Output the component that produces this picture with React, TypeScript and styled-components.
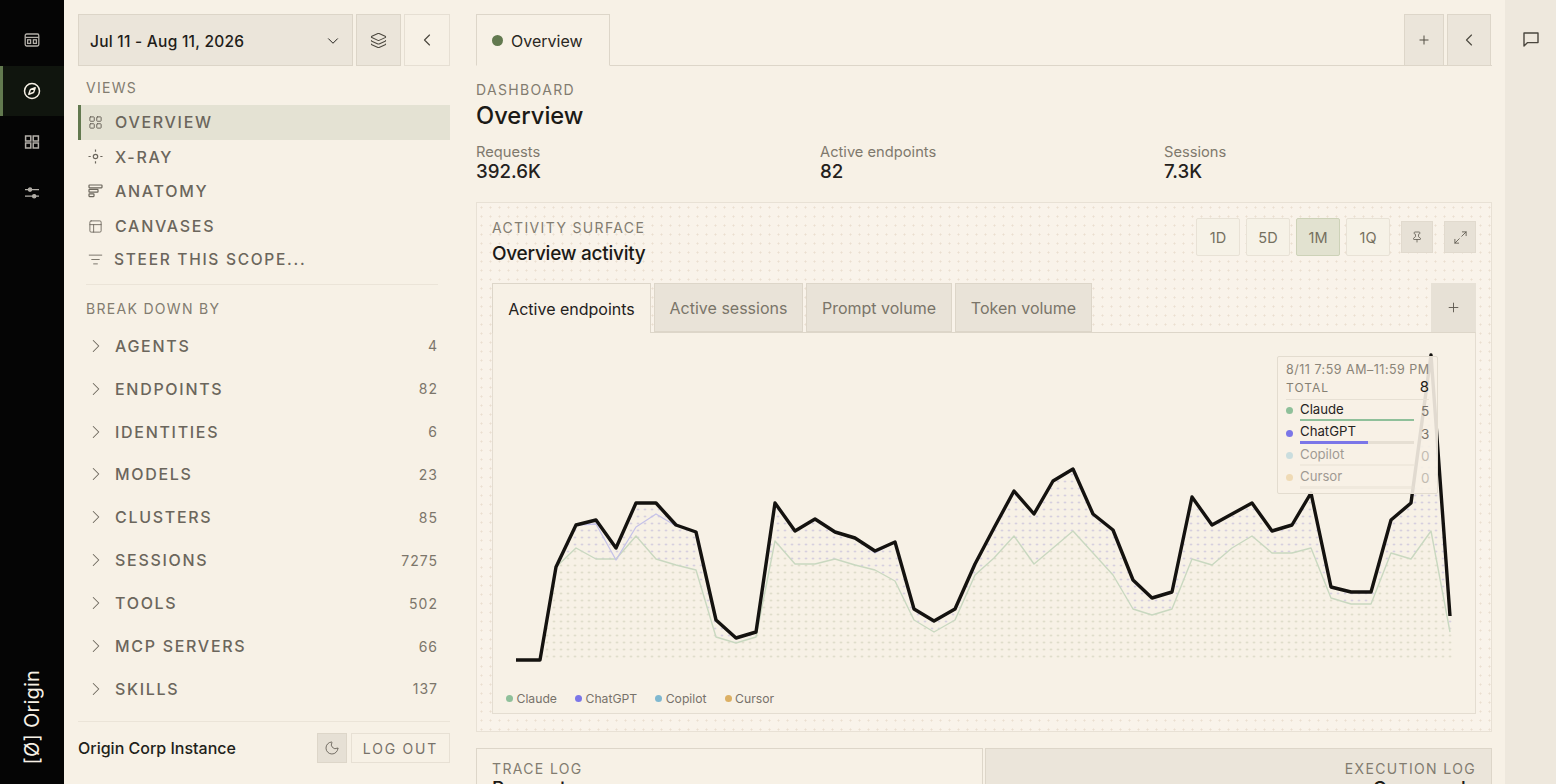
import React from "react";
import styled, { createGlobalStyle } from "styled-components";
import { ChevronDown, ChevronLeft, ChevronRight, Compass, Layers, LayoutGrid, ListFilter, Maximize2, Moon, PanelsTopLeft, Pin, Plus } from "lucide-react";

const Global = createGlobalStyle`
  html, body { margin: 0; height: 784px; overflow: hidden; background: #f7f1e6; }
  body { font-family: Inter, "Liberation Sans", sans-serif; color: #1c1a16; }
  * { box-sizing: border-box; }
  #root { height: 784px; }
`;

const Page = styled.div`display: flex; width: 1556px; height: 784px; overflow: hidden; background: #f7f1e6;`;
const Rail = styled.nav`width: 64px; flex: none; background: #050505; display: flex; flex-direction: column; padding-top: 15px;`;
const RailButton = styled.div<{ $active?: boolean }>`
  height: 50px; margin-bottom: 1px; display: flex; align-items: center; justify-content: center;
  color: ${p => p.$active ? "#f7f1e6" : "#b4b0a9"};
  background: ${p => p.$active ? "#10150e" : "transparent"};
  border-left: ${p => p.$active ? "3px solid #62794f" : "0"};
  padding-right: ${p => p.$active ? "3px" : "0"};
`;
const Brand = styled.div`
  margin-top: auto; margin-bottom: 20px; align-self: center; writing-mode: vertical-rl; transform: rotate(180deg);
  color: #f7f1e6; font-size: 20px; line-height: 24px; letter-spacing: .2px; white-space: nowrap;
`;
const Sidebar = styled.aside`width: 399px; flex: none; padding: 14px 13px 0 14px; display: flex; flex-direction: column;`;
const TopControls = styled.div`display: flex; gap: 3px; height: 52px;`;
const DateButton = styled.div`
  flex: 1; background: #ebe5da; border: 1px solid #dcd5c8; display: flex; align-items: center; justify-content: space-between;
  padding: 2px 10px 0 11px; font-size: 15.5px; font-weight: 500; letter-spacing: .25px; color: #1f1d19;
`;
const IconBox = styled.div<{ $w?: number; $filled?: boolean }>`
  width: ${p => p.$w ?? 46}px; flex: none; display: flex; align-items: center; justify-content: center;
  background: ${p => p.$filled ? "#ebe5da" : "transparent"}; border: 1px solid ${p => p.$filled ? "#dcd5c8" : "#e6dfd3"}; color: #4c483f;
`;
const GroupLabel = styled.div<{ $top: number; $bottom: number }>`
  font-size: 14px; line-height: 17px; letter-spacing: 1.3px; color: #827c70; padding-left: 8px;
  margin-top: ${p => p.$top}px; margin-bottom: ${p => p.$bottom}px;
`;
const ViewRow = styled.div<{ $active?: boolean }>`
  height: 34.6px; display: flex; align-items: center; gap: 12px; padding-left: ${p => p.$active ? "7px" : "10px"};
  font-size: 16px; letter-spacing: 1.7px; font-weight: 500; color: #6b665c;
  background: ${p => p.$active ? "#e4e2d3" : "transparent"};
  border-left: ${p => p.$active ? "3px solid #62794f" : "0"};
`;
const SteerRow = styled.div`
  height: 33px; display: flex; align-items: center; gap: 11px; padding-left: 10px;
  font-size: 15.5px; letter-spacing: 1.72px; font-weight: 500; color: #6b665c;
`;
const Divider = styled.div`height: 1px; background: #ebe4d8; margin: 8px 12px 0 8px;`;
const BreakRow = styled.div`
  height: 42.9px; display: flex; align-items: center; padding: 0 12px 0 7px; font-size: 16px; letter-spacing: 1.7px; font-weight: 500; color: #6b665c;
`;
const RowName = styled.span`margin-left: 8px; flex: 1;`;
const RowCount = styled.span`font-size: 14px; letter-spacing: 1px; font-weight: 400; color: #7c766b;`;
const Footer = styled.div`
  margin-top: 11px; border-top: 1px solid #ebe4d8; padding-top: 11px; display: flex; align-items: flex-start; height: 54px; align-self: stretch;
`;
const Instance = styled.div`flex: 1; font-size: 16px; line-height: 30px; font-weight: 500; color: #221f1a;`;
const MoonButton = styled.div`width: 30px; height: 30px; background: #e6e0d5; border: 1px solid #ddd6c9; display: flex; align-items: center; justify-content: center; color: #625d53;`;
const LogOut = styled.div`width: 99px; height: 30px; margin-left: 4px; border: 1px solid #e7e0d4; display: flex; align-items: center; justify-content: center; font-size: 14px; letter-spacing: 1.8px; color: #77726a;`;

const Main = styled.main`width: 1016px; margin-left: 13px; flex: none; padding-top: 14px;`;
const TabBar = styled.div`height: 52px; display: flex; border-bottom: 1px solid #ddd6c9;`;
const DocTab = styled.div`
  width: 134px; height: 52px; border: 1px solid #ddd6c9; border-bottom-color: #f7f1e6; display: flex; align-items: center; gap: 8px; padding: 2px 0 0 15px;
  font-size: 16px; color: #2a2722; background: #f7f1e6;
`;
const Dot = styled.span<{ $c: string; $s?: number }>`
  width: ${p => p.$s ?? 6}px; height: ${p => p.$s ?? 6}px; border-radius: 50%; background: ${p => p.$c}; flex: none; margin-top: -1px;
`;
const TabActions = styled.div`margin-left: auto; margin-right: 1px; display: flex; gap: 3px;`;
const TabAction = styled.div<{ $w: number }>`
  width: ${p => p.$w}px; height: 52px; display: flex; align-items: center; justify-content: center; color: #4f4b42;
  background: #ebe5da; border: 1px solid #ddd6c9;
`;
const Eyebrow = styled.div`font-size: 14px; line-height: 17px; letter-spacing: 1.35px; color: #827c70; margin-top: 15px;`;
const Title = styled.h1`font-size: 23.7px; line-height: 29px; font-weight: 500; margin: 3px 0 0;`;
const Stats = styled.div`display: grid; grid-template-columns: 344px 344px 1fr; margin-top: 14px; height: 44px;`;
const StatLabel = styled.div`font-size: 14.7px; line-height: 17px; color: #7f796d;`;
const StatValue = styled.div`font-size: 18.7px; line-height: 22px; font-weight: 500; color: #24211c;`;

const Surface = styled.section`
  margin-top: 14px; height: 530px; border: 1px solid #e8e1d5; padding: 15px 15px 0;
  background-color: #f9f3ea;
  background-image: radial-gradient(circle, #eadfd0 .9px, transparent 1.15px);
  background-size: 9px 9px;
`;
const SurfaceHead = styled.div`display: flex; height: 65px;`;
const SurfaceTitles = styled.div`flex: 1; padding-top: 1px;`;
const SurfaceEyebrow = styled.div`font-size: 14px; line-height: 17px; letter-spacing: 1.35px; color: #827c70;`;
const SurfaceTitle = styled.div`font-size: 19px; line-height: 24px; font-weight: 500; margin-top: 6px; letter-spacing: -.25px;`;
const Ranges = styled.div`display: flex; gap: 6px; margin-right: 11px; height: 38px;`;
const Range = styled.div<{ $active?: boolean }>`
  width: 44px; display: flex; align-items: center; justify-content: center; font-size: 14.5px; color: #75705f;
  background: ${p => p.$active ? "#e2e2d0" : "#f6f2e7"}; border: 1px solid ${p => p.$active ? "#cdd2b8" : "#e8e2d6"}; border-radius: 2px;
`;
const ToolButton = styled.div<{ $gap?: number }>`
  width: 32px; height: 32px; margin-top: 3px; margin-left: ${p => p.$gap ?? 0}px; background: #e7e1d6; border: 1px solid #e1dace;
  display: flex; align-items: center; justify-content: center; color: #5f5a50;
`;
const ChartTabs = styled.div`display: flex; gap: 3px; height: 50px; align-items: stretch;`;
const ChartTab = styled.div<{ $active?: boolean; $w: number }>`
  width: ${p => p.$w}px; display: flex; align-items: center; justify-content: center; font-size: 16px; padding-top: 1px;
  color: ${p => p.$active ? "#24211c" : "#7a7569"};
  background: ${p => p.$active ? "#f7f1e6" : "#e9e3d8"};
  border: 1px solid #ddd6c9; border-bottom: ${p => p.$active ? "0" : "1px solid #ddd6c9"};
  height: ${p => p.$active ? "50px" : "49px"};
  position: relative; z-index: 1;
`;
const AddTab = styled.div`
  margin-left: auto; width: 45px; height: 49px; background: #e7e1d6; display: flex; align-items: center; justify-content: center; color: #5f5a50;
`;
const ChartCard = styled.div`
  position: relative; height: 382px; margin-top: -1px; background: #f7f1e6; border: 1px solid #e4ddd1; border-top: 1px solid #ddd6c9;
`;
const ChartSvg = styled.svg`display: block; position: absolute; left: 0; top: 0;`;
const Legend = styled.div`position: absolute; left: 13px; bottom: 7px; display: flex; gap: 18px; font-size: 12.2px; line-height: 15px; color: #77726a;`;
const LegendItem = styled.div`display: flex; align-items: center; gap: 3.5px;`;
const Tooltip = styled.div`
  position: absolute; left: 784px; top: 23px; width: 161px; height: 138px; padding: 5px 8px 0 8px;
  background: rgba(247,241,230,.9); border: 1px solid #e3dccf; border-radius: 2px; font-size: 13.2px; color: #25221d;
`;
const TipTime = styled.div`font-size: 12.5px; line-height: 15px; letter-spacing: .5px; color: #8a8478; white-space: nowrap;`;
const TipTotal = styled.div`
  display: flex; justify-content: space-between; align-items: baseline; height: 22px; font-size: 12px; letter-spacing: 1px; color: #857f73;
  border-bottom: 1px solid #e7e0d4; line-height: 18px; margin-top: 1px;
`;
const TipStrong = styled.span`font-size: 15px; color: #1c1a16; letter-spacing: 0;`;
const TipRow = styled.div<{ $muted?: boolean }>`
  display: flex; align-items: center; height: 22.4px; gap: 7px; opacity: ${p => p.$muted ? .42 : 1};
`;
const TipBody = styled.div`flex: 1; height: 100%; position: relative; line-height: 17px; padding-top: 1px;`;
const TipBar = styled.div`position: absolute; left: 0; right: 0; bottom: 1px; height: 2.5px; background: #e6dfd3;`;
const TipFill = styled.div`height: 100%;`;
const TipValue = styled.span`width: 8px; text-align: right; color: #78736a; font-size: 13.5px;`;

const Logs = styled.div`display: flex; gap: 2px; margin-top: 16px; height: 60px;`;
const LogPanel = styled.div<{ $alt?: boolean }>`
  flex: 1; border: 1px solid #ddd6c9; border-bottom: 0; padding: 11px 15px 0; background: ${p => p.$alt ? "#ebe5da" : "transparent"};
  text-align: ${p => p.$alt ? "right" : "left"};
`;
const LogLabel = styled.div`font-size: 14px; line-height: 17px; letter-spacing: 1.35px; color: #827c70;`;
const LogTitle = styled.div`font-size: 19px; line-height: 24px; font-weight: 500;`;
const RightRail = styled.aside`
  width: 51px; margin-left: 13px; flex: none; background: #eee8dd; display: flex; justify-content: center; padding-top: 32px; color: #4a463e;
`;

const CalendarGlyph = () => (
  <svg width="16" height="16" viewBox="0 0 16 16" fill="none" stroke="currentColor" strokeWidth="1.3">
    <rect x="1.2" y="2" width="13.6" height="12" rx="1.4" />
    <path d="M1.2 5.4h13.6" />
    <rect x="3.6" y="7.8" width="3" height="3.6" />
    <rect x="9.4" y="7.8" width="3" height="3.6" />
  </svg>
);
const GridGlyph = () => (
  <svg width="16" height="16" viewBox="0 0 16 16" fill="none" stroke="currentColor" strokeWidth="1.5">
    <rect x="1.6" y="2" width="5.2" height="5" />
    <rect x="9.2" y="2" width="5.2" height="5" />
    <rect x="1.6" y="9" width="5.2" height="5" />
    <rect x="9.2" y="9" width="5.2" height="5" />
  </svg>
);
const SlidersGlyph = () => (
  <svg width="16" height="14" viewBox="0 0 16 14" fill="currentColor" stroke="currentColor" strokeWidth="1.3">
    <path d="M1 3.6h14M1 10.2h14" fill="none" />
    <circle cx="6" cy="3.6" r="1.6" />
    <circle cx="10.2" cy="10.2" r="1.6" />
  </svg>
);
const XrayGlyph = () => (
  <svg width="15" height="15" viewBox="0 0 15 15" fill="none" stroke="currentColor" strokeWidth="1.2">
    <circle cx="7.5" cy="7.5" r="2.2" />
    <path d="M7.5 .5v2.2M7.5 12.3v2.2M.5 7.5h2.2M12.3 7.5h2.2" />
  </svg>
);
const AnatomyGlyph = () => (
  <svg width="15" height="14" viewBox="0 0 15 14" fill="none" stroke="currentColor" strokeWidth="1.2">
    <rect x="1" y="1" width="13" height="2.8" rx=".5" />
    <rect x="1" y="5.4" width="9" height="2.8" rx=".5" />
    <rect x="1" y="9.8" width="5" height="2.8" rx=".5" />
  </svg>
);
const ChatGlyph = () => (
  <svg width="16" height="15" viewBox="0 0 16 15" fill="none" stroke="currentColor" strokeWidth="1.4" strokeLinejoin="round">
    <path d="M1 1h14v9.6H4.6L1 14z" />
  </svg>
);

const xs = [516,540,556,576,596,616,636,656,676,696,716,736,756,775,795,815,835,855,875,895,914,934,955,975,994,1014,1034,1053,1073,1093,1113,1133,1152,1172,1192,1212,1232,1252,1272,1292,1311,1331,1351,1371,1391,1411,1431,1450];
const blackY = [660,660,567,525,520,548,503,503,525,532,620,638,632,503,531,519,532,538,551,542,609,621,609,564,528,491,514,481,469,514,530,580,598,592,497,525,514,503,531,525,493,587,592,592,520,503,355,616];
const greenY = [660,660,567,548,559,559,536,559,565,570,637,643,637,541,564,564,559,565,570,581,620,632,620,575,558,536,564,548,531,553,575,609,615,609,559,565,548,536,553,553,548,598,604,604,553,559,531,632];
const purpleY = blackY.map((y, i) => (i === 4 ? 524 : i === 5 ? 560 : i === 6 ? 527 : i === 7 ? 514 : i === 8 ? 526 : i === 18 ? 553 : y));
const ox = 493, oy = 333;
const pts = (ys: number[]) => xs.map((x, i) => `${x - ox},${ys[i] - oy}`).join(" ");
const area = (ys: number[]) => `${pts(ys)} ${xs[xs.length - 1] + 3 - ox},${616 - oy} ${xs[xs.length - 1] + 3 - ox},${658 - oy} ${xs[0] - ox},${658 - oy}`;

const Chart = () => (
  <ChartSvg width="982" height="340" viewBox="0 0 982 340" fill="none">
    <defs>
      <pattern id="dotsPurple" width="7" height="7" patternUnits="userSpaceOnUse" patternTransform="translate(1.5 -2)">
        <circle cx="3.5" cy="3.5" r="1" fill="#c8c1da" />
      </pattern>
      <pattern id="dotsGreen" width="7" height="7" patternUnits="userSpaceOnUse" patternTransform="translate(1.5 -2)">
        <circle cx="3.5" cy="3.5" r="1" fill="#d4d4c0" />
      </pattern>
    </defs>
    <polygon points={area(blackY)} fill="url(#dotsPurple)" />
    <polygon points={area(greenY)} fill="#f7f1e6" />
    <polygon points={area(greenY)} fill="url(#dotsGreen)" />
    <polyline points={pts(greenY)} stroke="#c9d8c0" strokeWidth="1.4" strokeLinejoin="round" />
    <polyline points={pts(purpleY)} stroke="#c5c2e8" strokeWidth="1.3" strokeLinejoin="round" />
    <polyline points={pts(blackY)} stroke="#14120f" strokeWidth="3.4" strokeLinejoin="round" />
  </ChartSvg>
);

const views = [
  { n: "OVERVIEW", i: <LayoutGrid size={15} strokeWidth={1.6} />, active: true },
  { n: "X-RAY", i: <XrayGlyph /> },
  { n: "ANATOMY", i: <AnatomyGlyph /> },
  { n: "CANVASES", i: <PanelsTopLeft size={15} strokeWidth={1.4} /> },
];
const breakdown: [string, string][] = [["AGENTS","4"],["ENDPOINTS","82"],["IDENTITIES","6"],["MODELS","23"],["CLUSTERS","85"],["SESSIONS","7275"],["TOOLS","502"],["MCP SERVERS","66"],["SKILLS","137"]];
const tipRows = [
  { n: "Claude", v: 5, c: "#8fc09a", w: 100 },
  { n: "ChatGPT", v: 3, c: "#7b76e8", w: 60 },
  { n: "Copilot", v: 0, c: "#8cc3d4", w: 0 },
  { n: "Cursor", v: 0, c: "#e5bb72", w: 0 },
];

export default function App() {
  return (
    <Page>
      <Global />
      <Rail>
        <RailButton><CalendarGlyph /></RailButton>
        <RailButton $active><Compass size={18} strokeWidth={2} /></RailButton>
        <RailButton><GridGlyph /></RailButton>
        <RailButton><SlidersGlyph /></RailButton>
        <Brand>[Ø] Origin</Brand>
      </Rail>
      <Sidebar>
        <TopControls>
          <DateButton>Jul 11 - Aug 11, 2026<ChevronDown size={18} strokeWidth={1.3} /></DateButton>
          <IconBox $w={45} $filled><Layers size={17} strokeWidth={1.5} /></IconBox>
          <IconBox><ChevronLeft size={20} strokeWidth={1.4} /></IconBox>
        </TopControls>
        <GroupLabel $top={13} $bottom={9}>VIEWS</GroupLabel>
        {views.map(v => <ViewRow key={v.n} $active={v.active}>{v.i}{v.n}</ViewRow>)}
        <SteerRow><ListFilter size={15} strokeWidth={1.4} />STEER THIS SCOPE...</SteerRow>
        <Divider />
        <GroupLabel $top={15} $bottom={7}>BREAK DOWN BY</GroupLabel>
        {breakdown.map(([n, c]) => (
          <BreakRow key={n}>
            <ChevronRight size={22} strokeWidth={1.1} />
            <RowName>{n}</RowName>
            <RowCount>{c}</RowCount>
          </BreakRow>
        ))}
        <Footer>
          <Instance>Origin Corp Instance</Instance>
          <MoonButton><Moon size={16} strokeWidth={1.3} /></MoonButton>
          <LogOut>LOG OUT</LogOut>
        </Footer>
      </Sidebar>
      <Main>
        <TabBar>
          <DocTab><Dot $c="#62794f" $s={11} />Overview</DocTab>
          <TabActions>
            <TabAction $w={40}><Plus size={14} strokeWidth={1.7} /></TabAction>
            <TabAction $w={44}><ChevronLeft size={20} strokeWidth={1.4} /></TabAction>
          </TabActions>
        </TabBar>
        <Eyebrow>DASHBOARD</Eyebrow>
        <Title>Overview</Title>
        <Stats>
          <div><StatLabel>Requests</StatLabel><StatValue>392.6K</StatValue></div>
          <div><StatLabel>Active endpoints</StatLabel><StatValue>82</StatValue></div>
          <div><StatLabel>Sessions</StatLabel><StatValue>7.3K</StatValue></div>
        </Stats>
        <Surface>
          <SurfaceHead>
            <SurfaceTitles>
              <SurfaceEyebrow>ACTIVITY SURFACE</SurfaceEyebrow>
              <SurfaceTitle>Overview activity</SurfaceTitle>
            </SurfaceTitles>
            <Ranges>
              <Range>1D</Range><Range>5D</Range><Range $active>1M</Range><Range>1Q</Range>
            </Ranges>
            <ToolButton><Pin size={12} strokeWidth={1.6} /></ToolButton>
            <ToolButton $gap={11}><Maximize2 size={15} strokeWidth={1.4} /></ToolButton>
          </SurfaceHead>
          <ChartTabs>
            <ChartTab $active $w={159}>Active endpoints</ChartTab>
            <ChartTab $w={149}>Active sessions</ChartTab>
            <ChartTab $w={146}>Prompt volume</ChartTab>
            <ChartTab $w={137}>Token volume</ChartTab>
            <AddTab><Plus size={15} strokeWidth={1.5} /></AddTab>
          </ChartTabs>
          <ChartCard>
            <Chart />
            <Tooltip>
              <TipTime>8/11 7:59 AM–11:59 PM</TipTime>
              <TipTotal>TOTAL<TipStrong>8</TipStrong></TipTotal>
              {tipRows.map(r => (
                <TipRow key={r.n} $muted={r.v === 0}>
                  <Dot $c={r.c} $s={7} />
                  <TipBody>
                    {r.n}
                    <TipBar><TipFill style={{ width: `${r.w}%`, background: r.c }} /></TipBar>
                  </TipBody>
                  <TipValue>{r.v}</TipValue>
                </TipRow>
              ))}
            </Tooltip>
            <Legend>
              <LegendItem><Dot $c="#8fc09a" $s={7} />Claude</LegendItem>
              <LegendItem><Dot $c="#7b76e8" $s={7} />ChatGPT</LegendItem>
              <LegendItem><Dot $c="#7fb8d0" $s={7} />Copilot</LegendItem>
              <LegendItem><Dot $c="#dcb064" $s={7} />Cursor</LegendItem>
            </Legend>
          </ChartCard>
        </Surface>
        <Logs>
          <LogPanel><LogLabel>TRACE LOG</LogLabel><LogTitle>Requests</LogTitle></LogPanel>
          <LogPanel $alt><LogLabel>EXECUTION LOG</LogLabel><LogTitle>Commands</LogTitle></LogPanel>
        </Logs>
      </Main>
      <RightRail><ChatGlyph /></RightRail>
    </Page>
  );
}
